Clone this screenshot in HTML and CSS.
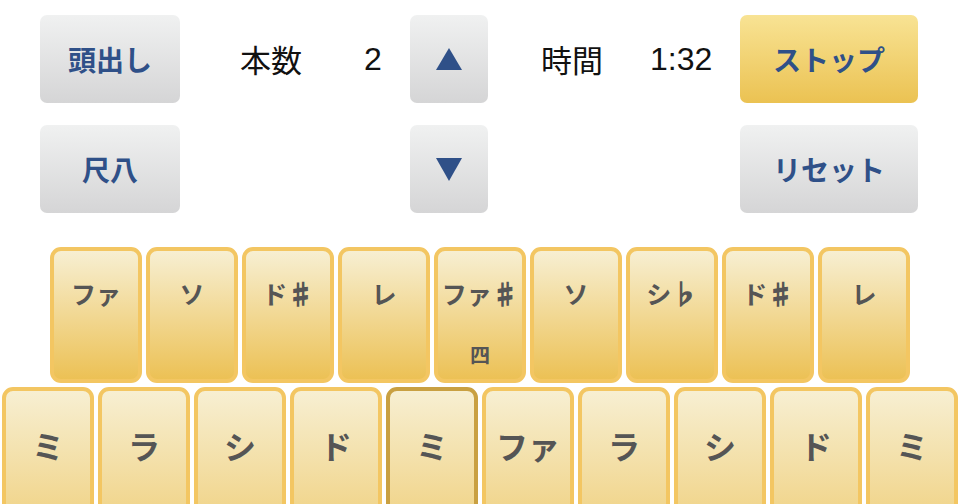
FILE: index.html
```html
<!DOCTYPE html>
<html lang="ja">
<head>
<meta charset="utf-8">
<link rel="stylesheet" href="styles.css">
</head>
<body>
<div class="controls">
  <button class="btn gray">頭出し</button>
  <div class="info"><span class="label lbl1">本数</span><span class="num">2</span></div>
  <button class="btn gray small"><svg width="28" height="24" viewBox="0 0 28 24"><polygon points="14,1 27,23 1,23" fill="#2f5088"/></svg></button>
  <div class="info info2"><span class="label lbl2">時間</span><span class="num">1:32</span></div>
  <button class="btn yellow">ストップ</button>

  <button class="btn gray">尺八</button>
  <div></div>
  <button class="btn gray small"><svg width="28" height="24" viewBox="0 0 28 24"><polygon points="1,1 27,1 14,24" fill="#2f5088"/></svg></button>
  <div></div>
  <button class="btn gray">リセット</button>
</div>

<div class="keys top">
  <div class="key"><span class="kn">ファ</span></div>
  <div class="key"><span class="kn">ソ</span></div>
  <div class="key"><span class="kn">ド<span class="acc">♯</span></span></div>
  <div class="key"><span class="kn">レ</span></div>
  <div class="key"><span class="kn">ファ<span class="acc">♯</span></span><span class="ks">四</span></div>
  <div class="key"><span class="kn">ソ</span></div>
  <div class="key"><span class="kn">シ<span class="acc">♭</span></span></div>
  <div class="key"><span class="kn">ド<span class="acc">♯</span></span></div>
  <div class="key"><span class="kn">レ</span></div>
</div>
<div class="keys bottom">
  <div class="key"><span class="kn">ミ</span></div>
  <div class="key"><span class="kn">ラ</span></div>
  <div class="key"><span class="kn">シ</span></div>
  <div class="key"><span class="kn">ド</span></div>
  <div class="key active"><span class="kn">ミ</span></div>
  <div class="key"><span class="kn">ファ</span></div>
  <div class="key"><span class="kn">ラ</span></div>
  <div class="key"><span class="kn">シ</span></div>
  <div class="key"><span class="kn">ド</span></div>
  <div class="key"><span class="kn">ミ</span></div>
</div>
</body>
</html>
```
FILE: styles.css
```css
html, body {
  margin: 0;
  padding: 0;
  background: #ffffff;
  width: 960px;
  height: 504px;
  overflow: hidden;
  font-family: "Noto Sans CJK JP", "Liberation Sans", sans-serif;
}

.controls {
  display: grid;
  grid-template-columns: 140px 230px 78px 252px 178px;
  grid-template-rows: 88px 88px;
  row-gap: 22px;
  padding: 15px 0 0 40px;
}

.btn {
  border: none;
  border-radius: 7px;
  margin: 0;
  padding: 0;
  font-family: "Noto Sans CJK JP", sans-serif;
  font-weight: bold;
  font-size: 28px;
  line-height: 1;
  color: #2f5088;
  display: flex;
  align-items: center;
  justify-content: center;
}

.gray {
  background: linear-gradient(to bottom, #f0f1f1, #d5d5d6);
}

.yellow {
  background: linear-gradient(to bottom, #f8e394, #ebc252);
}

.small svg {
  display: block;
}

.info {
  display: flex;
  align-items: center;
  color: #111;
}

.label {
  font-family: "Noto Sans CJK JP", sans-serif;
  font-weight: normal;
  font-size: 31px;
  line-height: 1;
  margin-top: -2px;
}

.lbl1 {
  padding-left: 60px;
  width: 124px;
}

.lbl2 {
  padding-left: 53px;
  width: 109px;
}

.num {
  font-family: "Liberation Sans", Arial, sans-serif;
  font-size: 32px;
  line-height: 1;
}

.keys {
  display: flex;
  justify-content: center;
  gap: 4px;
}

.keys.top {
  margin-top: 34px;
}

.keys.bottom {
  margin-top: 4px;
}

.key {
  box-sizing: border-box;
  width: 92px;
  height: 136px;
  border: 4px solid #f3c662;
  border-radius: 11px;
  background: linear-gradient(to bottom, #f7efd2, #ecc155);
  color: #555555;
  font-weight: bold;
  display: flex;
  flex-direction: column;
  align-items: center;
}

.key.active {
  border-color: #c9a042;
}

.acc {
  font-size: 1.05em;
  -webkit-text-stroke: 1.3px #555555;
}

.top .key .kn {
  font-size: 25px;
  line-height: 26px;
  margin-top: 29px;
  white-space: nowrap;
}

.bottom .key {
  height: 160px;
  background: linear-gradient(to bottom, #f7efd2, #ecc155 140%);
}

.bottom .key .kn {
  font-size: 32px;
  line-height: 32px;
  margin-top: 38px;
  white-space: nowrap;
}

.ks {
  font-size: 20px;
  line-height: 20px;
  margin-top: 39px;
}
```
